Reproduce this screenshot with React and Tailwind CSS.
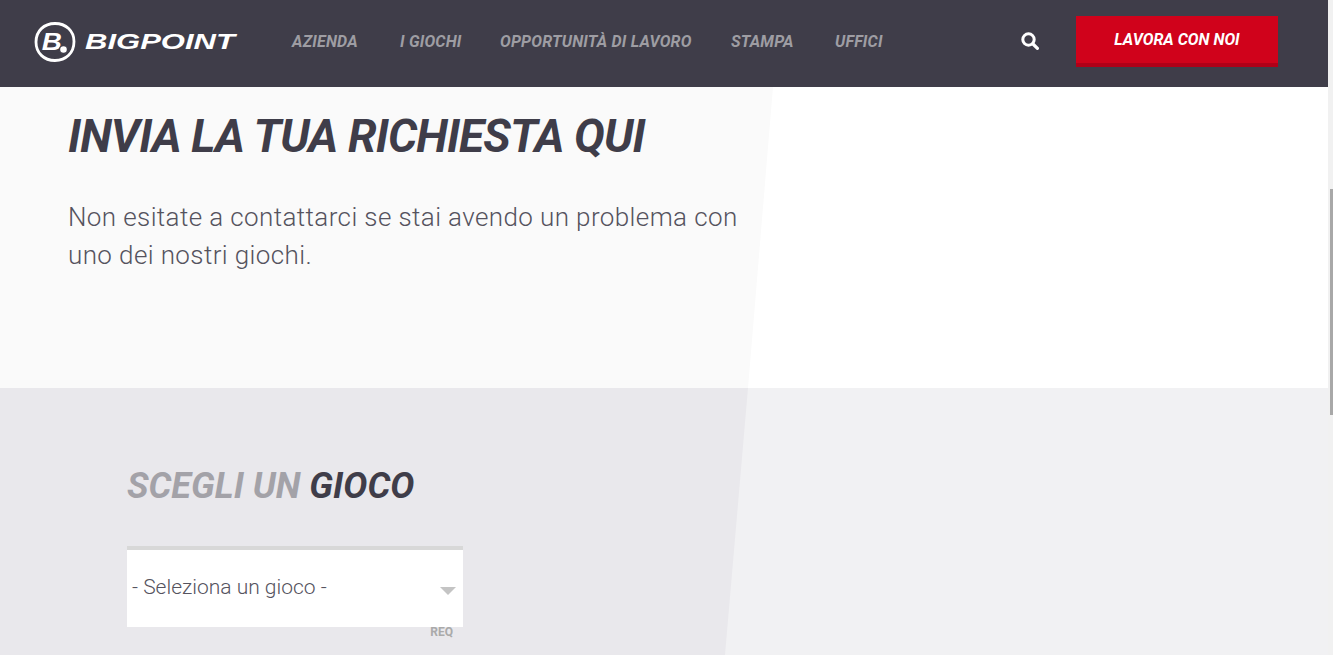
const navItems = [
  { label: 'AZIENDA', width: 'w-[68px]' },
  { label: 'I GIOCHI', width: 'w-[60px]' },
  { label: 'OPPORTUNITÀ DI LAVORO', width: 'w-[191px]' },
  { label: 'STAMPA', width: 'w-[64px]' },
  { label: 'UFFICI', width: 'w-[47px]' },
];

function Logo() {
  return (
    <div className="flex items-center gap-[9px]">
      <svg width="42" height="42" viewBox="0 0 42 42" fill="none">
        <path d="M21 2.5C32 2.5 40 10 40 20.5C40 32 32 39.5 21 39.5C10 39.5 2 32 2 21C2 10 10 2.5 21 2.5Z" stroke="white" strokeWidth="2.8" />
        <text x="8" y="29.5" transform="translate(-1.5 0) scale(1.16 1)" fill="white" fontFamily="'Liberation Sans', sans-serif" fontSize="24" fontWeight="700" fontStyle="italic">B</text>
        <circle cx="29.5" cy="28.5" r="4" fill="white" stroke="#3f3d49" strokeWidth="1.4" />
      </svg>
      <span className="w-[152px] origin-left scale-x-[1.41] whitespace-nowrap font-['Liberation_Sans',sans-serif] text-[22px] leading-none font-bold italic text-white">
        BIGPOINT
      </span>
    </div>
  );
}

function Header() {
  return (
    <header className="flex h-[87px] items-center bg-[#3f3d49] pb-[4px] pl-[34px]">
      <Logo />
      <nav className="ml-[55px] flex gap-[40px]">
        {navItems.map((item) => (
          <a key={item.label} className={`${item.width} whitespace-nowrap text-[16px] font-bold italic tracking-[0.2px] text-[#9e9da3]`}>
            {item.label}
          </a>
        ))}
      </nav>
      <svg className="mb-[2px] ml-[139px]" width="18" height="18" viewBox="0 0 18 18" fill="none" stroke="white" strokeLinecap="round">
        <circle cx="7.5" cy="7.5" r="5.7" strokeWidth="3" />
        <path d="M12 12L16.4 16.4" strokeWidth="3.2" />
      </svg>
      <button className="ml-[37px] h-[51px] w-[202px] border-b-4 border-[#b00018] bg-[#d0021b] text-[16px] font-bold italic text-white">
        LAVORA CON NOI
      </button>
    </header>
  );
}

export default function App() {
  return (
    <div className="flex h-[655px] overflow-hidden font-['Roboto',sans-serif]">
      <div className="w-[1328px]">
        <Header />

        <section className="relative h-[301px] bg-white px-[68px] pt-[21px]">
          <div className="absolute inset-y-0 left-0 w-[773px] bg-[#fafafa] [clip-path:polygon(0_0,100%_0,748px_100%,0_100%)]" />
          <div className="relative">
            <h1 className="text-[46px] leading-[56px] font-bold tracking-[-0.85px] italic text-[#3f3d49]">INVIA LA TUA RICHIESTA QUI</h1>
            <p className="mt-[34px] w-[680px] text-[26px] leading-[38px] font-light tracking-[0.39px] text-[#55535e]">
              Non esitate a contattarci se stai avendo un problema con uno dei nostri giochi.
            </p>
          </div>
        </section>

        <section className="relative h-[267px] bg-[#f1f1f3] pl-[127px] pt-[76px]">
          <div className="absolute inset-y-0 left-0 w-[748px] bg-[#e9e8ec] [clip-path:polygon(0_0,100%_0,725px_100%,0_100%)]" />
          <div className="relative w-[336px]">
            <h2 className="text-[36px] leading-[44px] font-bold italic text-[#a3a2a8]">
              SCEGLI UN <span className="text-[#3f3d49]">GIOCO</span>
            </h2>
            <div className="mt-[38px] flex h-[81px] items-center justify-between border-t-4 border-[#d8d8d8] bg-white pb-[2px] pl-[5px] pr-[7px]">
              <span className="text-[21px] font-light text-[#55535e]">- Seleziona un gioco -</span>
              <span className="mt-[7px] h-0 w-0 border-x-8 border-t-8 border-x-transparent border-t-[#c4c4c4]" />
            </div>
            <div className="pr-[10px] text-right text-[12px] leading-[10px] font-bold text-[#aaaaaa]">REQ</div>
          </div>
        </section>
      </div>

      <div className="w-[5px] bg-[#f1f1f1] pl-[2px] pt-[189px]">
        <div className="h-[226px] bg-[#a8a8a8]" />
      </div>
    </div>
  );
}
